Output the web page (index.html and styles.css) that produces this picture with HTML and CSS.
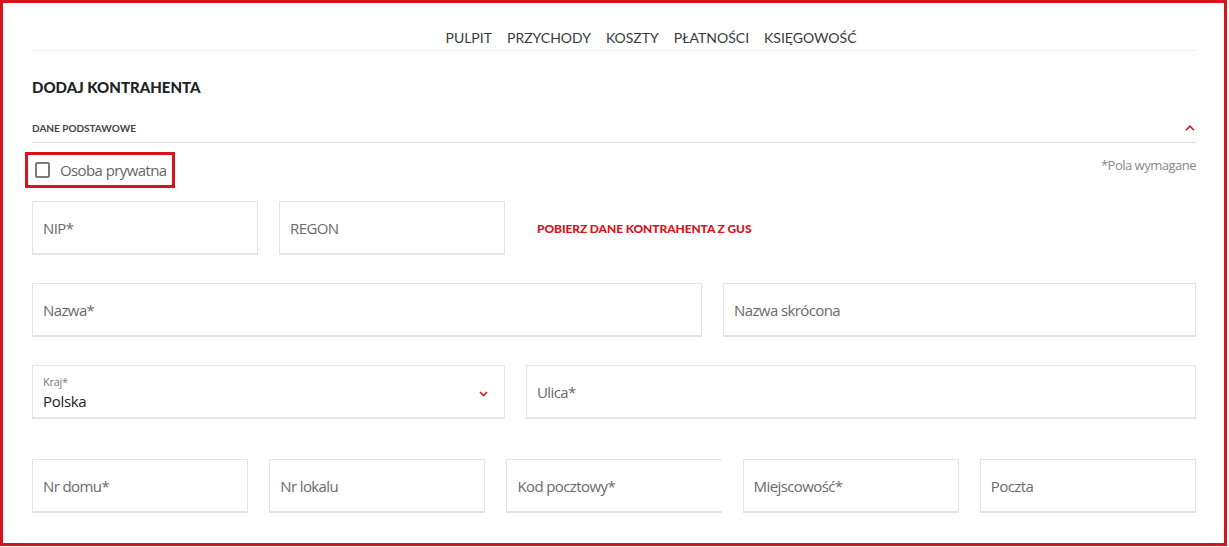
FILE: index.html
```html
<!DOCTYPE html>
<html lang="pl">
<head>
  <meta charset="UTF-8" />
  <title>Dodaj kontrahenta</title>
  <link rel="stylesheet" href="styles.css">
</head>
<body>
  <div class="frame">
    <nav class="top-nav">
      <a href="#">PULPIT</a>
      <a href="#">PRZYCHODY</a>
      <a href="#">KOSZTY</a>
      <a href="#">PŁATNOŚCI</a>
      <a href="#">KSIĘGOWOŚĆ</a>
    </nav>

    <h1 class="page-title">DODAJ KONTRAHENTA</h1>

    <div class="section-head">
      <span>DANE PODSTAWOWE</span>
      <svg class="chev-up" width="10" height="6" viewBox="0 0 10 6"><path d="M1 5.2 L5 1.2 L9 5.2" fill="none" stroke="#d9131b" stroke-width="1.6"/></svg>
    </div>

    <div class="check-row">
      <label class="private-box">
        <span class="checkbox"></span>
        <span class="check-label">Osoba prywatna</span>
      </label>
      <span class="required-note">*Pola wymagane</span>
    </div>

    <div class="form-row row-first">
      <div class="field w-half">NIP*</div>
      <div class="field w-half">REGON</div>
      <a href="#" class="gus-link">POBIERZ DANE KONTRAHENTA Z GUS</a>
    </div>

    <div class="form-row">
      <div class="field grow">Nazwa*</div>
      <div class="field w-wide">Nazwa skrócona</div>
    </div>

    <div class="form-row">
      <div class="field select w-wide">
        <div class="select-text">
          <span class="select-label">Kraj*</span>
          <span class="select-value">Polska</span>
        </div>
        <svg class="chev-down" width="9" height="6" viewBox="0 0 9 6"><path d="M1 1 L4.5 4.6 L8 1" fill="none" stroke="#d9131b" stroke-width="1.6"/></svg>
      </div>
      <div class="field grow">Ulica*</div>
    </div>

    <div class="form-row row-address">
      <div class="field grow">Nr domu*</div>
      <div class="field grow">Nr lokalu</div>
      <div class="field grow no-right">Kod pocztowy*</div>
      <div class="field grow">Miejscowość*</div>
      <div class="field grow">Poczta</div>
    </div>
  </div>
</body>
</html>
```

FILE: styles.css
```css
:root {
  --red: #d9131b;
  --line: #e4e4e4;
  --text: #666;
}

* {
  margin: 0;
  padding: 0;
  box-sizing: border-box;
}

body {
  background: #fff;
  font-family: "Open Sans", "Liberation Sans", sans-serif;
  color: var(--text);
}

.frame {
  width: 1227px;
  height: 546px;
  border: 3px solid var(--red);
  padding: 0 28px 0 29px;
}

.top-nav {
  display: flex;
  justify-content: center;
  gap: 15px;
  padding: 26px 0 3px 74px;
  line-height: 18px;
  border-bottom: 1px solid #f0f0f0;
}

.top-nav a {
  font-family: Lato, sans-serif;
  font-size: 14px;
  color: #3a3a3a;
  text-decoration: none;
}

.page-title {
  margin-top: 26px;
  font-family: Lato, sans-serif;
  font-size: 15px;
  font-weight: 900;
  line-height: 20px;
  color: #222;
}

.section-head {
  display: flex;
  justify-content: space-between;
  align-items: center;
  margin-top: 23px;
  padding: 0 1px 6px 0;
  line-height: 16px;
  border-bottom: 1px solid #dedede;
  font-family: Lato, sans-serif;
  font-size: 10px;
  font-weight: 700;
  color: #444;
}

.check-row {
  display: flex;
  justify-content: space-between;
  align-items: flex-start;
  margin-top: 9px;
}

.private-box {
  display: flex;
  align-items: center;
  gap: 10px;
  height: 36px;
  margin-left: -7px;
  padding: 0 5px 0 7px;
  border: 3px solid var(--red);
}

.checkbox {
  width: 15px;
  height: 16px;
  border: 2px solid #7a7a7a;
  border-radius: 2px;
}

.check-label {
  font-size: 15px;
  color: #666;
  letter-spacing: -0.6px;
}

.required-note {
  margin-top: 5px;
  font-size: 13px;
  line-height: 16px;
  color: #888;
  letter-spacing: -0.5px;
}

.form-row {
  display: flex;
  gap: 21px;
  margin-top: 28px;
}

.row-first {
  margin-top: 13px;
  align-items: center;
}

.row-address {
  margin-top: 40px;
}

.field {
  height: 54px;
  display: flex;
  align-items: center;
  padding-left: 10px;
  border: 1px solid var(--line);
  border-bottom-width: 2px;
  font-size: 15px;
  color: #6a6a6a;
  letter-spacing: -0.6px;
}

.field.no-right {
  border-right: none;
}

.w-half {
  width: 226px;
}

.w-wide {
  width: 473px;
  flex-shrink: 0;
}

.grow {
  flex: 1;
}

.gus-link {
  margin-left: 11px;
  font-family: Lato, sans-serif;
  font-size: 12px;
  font-weight: 900;
  color: var(--red);
  text-decoration: none;
  letter-spacing: -0.1px;
}

.select {
  justify-content: space-between;
  padding-right: 16px;
}

.select-text {
  display: flex;
  flex-direction: column;
  padding-top: 4px;
}

.select-label {
  font-size: 11px;
  line-height: 14px;
  color: #777;
  letter-spacing: -0.3px;
}

.select-value {
  margin-top: 2px;
  font-size: 15px;
  line-height: 21px;
  color: #222;
  letter-spacing: -0.3px;
}

.chev-up,
.chev-down {
  display: block;
}

.chev-down {
  margin-top: 4px;
}
```
